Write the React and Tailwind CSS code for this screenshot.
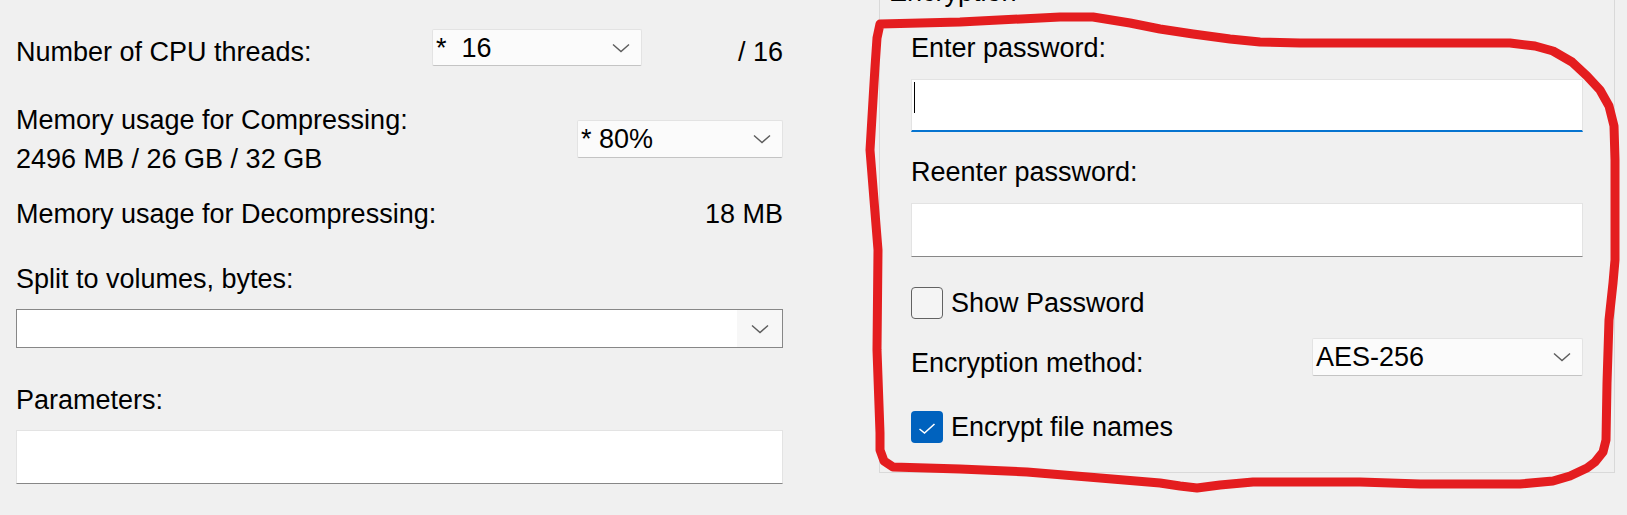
import React from "react";

const Chevron = () => (
  <svg width="18" height="10" viewBox="0 0 18 10" className="shrink-0">
    <polyline points="1,1.5 9,8.5 17,1.5" fill="none" stroke="#5c5c5c" strokeWidth="1.4" />
  </svg>
);

function Combo({ text, className }) {
  return (
    <div
      className={
        "flex items-start justify-between bg-[#fbfbfb] border border-[#e3e3e3] border-b-[#c4c4c4] rounded-[2px] pl-[3px] pr-[11px] " +
        className
      }
    >
      <span className="mt-[3px] leading-[31px] whitespace-pre">{text}</span>
      <span className="self-center flex">
        <Chevron />
      </span>
    </div>
  );
}

function Checkbox({ checked }) {
  if (checked) {
    return (
      <div className="w-[32px] h-[32px] rounded-[4px] bg-[#0062be] flex items-center justify-center shrink-0">
        <svg width="32" height="32" viewBox="0 0 32 32">
          <polyline points="8.5,18 13.5,22 23.5,13" fill="none" stroke="#ffffff" strokeWidth="1.6" />
        </svg>
      </div>
    );
  }
  return <div className="w-[32px] h-[32px] rounded-[4px] border border-[#626262] bg-[#f4f4f4] shrink-0" />;
}

const redPts = [
  [880, 24], [960, 22], [1060, 17], [1093, 17], [1130, 23], [1160, 29], [1193, 34], [1230, 39],
  [1260, 42], [1300, 43], [1510, 43], [1535, 46], [1553, 51], [1572, 62], [1587, 76], [1600, 90],
  [1609, 106], [1614, 126], [1615, 160], [1615, 260], [1613, 283], [1609, 320], [1607, 383],
  [1606, 440], [1603, 452], [1595, 462], [1587, 468], [1570, 476], [1553, 481], [1520, 484],
  [1420, 484], [1360, 482], [1253, 482], [1220, 485], [1197, 488], [1180, 486], [1160, 483],
  [1100, 478], [1027, 472], [960, 469], [893, 467], [884, 461], [880, 450], [880, 433],
  [877, 350], [878, 250], [870, 150], [873, 100], [875, 67], [877, 38], [880, 24],
];

export default function App() {
  return (
    <div className="relative w-[1627px] h-[515px] overflow-hidden bg-[#f0f0f0] text-black text-[27px] leading-[31px] font-['Liberation_Sans',Arial,sans-serif] flex pl-[16px]">
      {/* Left column */}
      <div className="w-[767px] shrink-0 flex flex-col">
        {/* Row 1 */}
        <div className="flex items-start pt-[29px]">
          <div className="w-[416px] shrink-0 mt-[8px]">Number of CPU threads:</div>
          <Combo text="*  16" className="w-[210px] h-[37px]" />
          <div className="ml-auto mt-[8px]">/ 16</div>
        </div>
        {/* Row 2 */}
        <div className="flex items-start">
          <div className="mt-[33px] leading-[39px]">
            <div>Memory usage for Compressing:</div>
            <div>2496 MB / 26 GB / 32 GB</div>
          </div>
          <Combo text="* 80%" className="ml-auto mt-[52px] w-[206px] h-[38px]" />
        </div>
        {/* Row 3 */}
        <div className="flex justify-between mt-[20px]">
          <div>Memory usage for Decompressing:</div>
          <div>18 MB</div>
        </div>
        <div className="mt-[34px]">Split to volumes, bytes:</div>
        <div className="mt-[14px] h-[39px] flex bg-white border border-[#878787]">
          <div className="flex-1" />
          <div className="w-[45px] bg-[#f7f7f7] flex items-center justify-center">
            <Chevron />
          </div>
        </div>
        <div className="mt-[37px]">Parameters:</div>
        <div className="mt-[14px] h-[54px] bg-white border border-[#e3e3e3] border-b-[#878787]" />
      </div>

      {/* Right column: Encryption group */}
      <div className="ml-[96px] w-[736px] h-[473px] shrink-0 border-l border-r border-b border-[#d9d9d9] flex flex-col">
        <div className="-mt-[23px] pl-[9px]">Encryption</div>
        <div className="px-[31px] flex flex-col">
          <div className="mt-[25px]">Enter password:</div>
          <div className="mt-[15px] h-[53px] bg-white border border-[#e3e3e3] border-b-2 border-b-[#0674d0]">
            <div className="ml-[2px] mt-[2px] w-px h-[31px] bg-black" />
          </div>
          <div className="mt-[25px]">Reenter password:</div>
          <div className="mt-[15px] h-[54px] bg-white border border-[#e3e3e3] border-b-[#878787]" />
          <div className="mt-[30px] flex items-start">
            <Checkbox />
            <div className="ml-[8px] mt-[1px]">Show Password</div>
          </div>
          <div className="flex items-start">
            <div className="mt-[29px]">Encryption method:</div>
            <Combo text="AES-256" className="ml-auto mt-[19px] w-[271px] h-[38px]" />
          </div>
          <div className="mt-[32px] flex items-start">
            <Checkbox checked />
            <div className="ml-[8px] mt-[1px]">Encrypt file names</div>
          </div>
        </div>
      </div>

      {/* Red hand-drawn annotation */}
      <svg
        className="absolute left-0 top-0 pointer-events-none"
        width="1627"
        height="515"
        viewBox="0 0 1627 515"
      >
        <polyline
          points={redPts.map((p) => p.join(",")).join(" ")}
          fill="none"
          stroke="#e41d1f"
          strokeWidth="9"
          strokeLinejoin="round"
          strokeLinecap="round"
        />
      </svg>
    </div>
  );
}
